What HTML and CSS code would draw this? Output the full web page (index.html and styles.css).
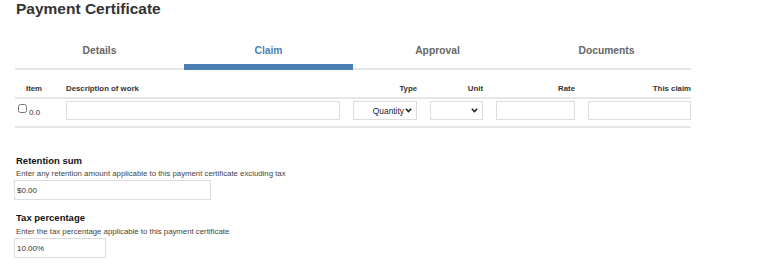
FILE: index.html
```html
<!DOCTYPE html>
<html>
<head>
<meta charset="utf-8">
<title>Payment Certificate</title>
<link rel="stylesheet" href="styles.css">
</head>
<body>
<div class="page">
    <h1 class="title">Payment Certificate</h1>

    <ul class="tabs">
        <li>Details</li>
        <li class="current">Claim</li>
        <li>Approval</li>
        <li>Documents</li>
    </ul>

    <div class="claim">
        <div class="row head">
            <div class="c-item">Item</div>
            <div class="c-left">Description of work</div>
            <div>Type</div>
            <div>Unit</div>
            <div>Rate</div>
            <div>This claim</div>
        </div>
        <div class="row line">
            <div class="c-item"><input type="checkbox" class="chk"><span class="num">0.0</span></div>
            <div><input type="text" class="field"></div>
            <div class="sel">
                <select class="field pick"><option>Quantity</option></select>
                <svg class="chev" width="7" height="5" viewBox="0 0 7 5"><path d="M0.8 0.8 L3.5 3.6 L6.2 0.8" fill="none" stroke="#222" stroke-width="1.6"/></svg>
            </div>
            <div class="sel">
                <select class="field pick"><option></option></select>
                <svg class="chev" width="7" height="5" viewBox="0 0 7 5"><path d="M0.8 0.8 L3.5 3.6 L6.2 0.8" fill="none" stroke="#222" stroke-width="1.6"/></svg>
            </div>
            <div><input type="text" class="field"></div>
            <div><input type="text" class="field"></div>
        </div>
    </div>

    <div class="group">
        <label class="lbl">Retention sum</label>
        <p class="hint">Enter any retention amount applicable to this payment certificate excluding tax</p>
        <input type="text" class="field box wide" value="$0.00">
    </div>

    <div class="group">
        <label class="lbl">Tax percentage</label>
        <p class="hint">Enter the tax percentage applicable to this payment certificate</p>
        <input type="text" class="field box narrow" value="10.00%">
    </div>
</div>
</body>
</html>
```

FILE: styles.css
```css
body,div,ul,li,p,h1{margin:0;padding:0;}
ul{list-style-type:none;}
body{background:#fff;color:#333;font-family:"Liberation Sans",Arial,sans-serif;}
.page{width:676px;margin-left:15px;}
.title{font-size:15.5px;line-height:18px;font-weight:700;color:#333;padding:0 0 0 1px;}

.tabs{display:grid;grid-template-columns:repeat(4,1fr);margin-top:24px;border-bottom:2px solid #e6e6e6;}
.tabs li{text-align:center;font-size:10.3px;font-weight:700;color:#666;line-height:12px;padding:3px 0 11px;}
.tabs li.current{color:#4a7fb3;border-bottom:6px solid #4a7fb3;margin-bottom:-2px;padding-bottom:7px;}

.claim{margin-top:14px;}
.row{display:grid;grid-template-columns:38px 274px 64px 53px 79px 103px;column-gap:13px;align-items:center;}
.head{font-size:7.8px;font-weight:700;line-height:10px;text-align:right;padding-bottom:3px;border-bottom:2px solid #e6e6e6;}
.head .c-item{text-align:center;}
.head .c-left{text-align:left;}
.line{padding:2px 0 6px;border-bottom:2px solid #e6e6e6;}
.line .c-item{display:flex;align-items:center;padding-left:3px;}
.chk{width:9px;height:9px;margin:0 2px 0 0;position:relative;top:-2px;}
.num{font-size:8px;color:#333;position:relative;top:2px;}

.field{display:block;box-sizing:border-box;width:100%;height:19px;border:1px solid #ddd;background:#fff;font-family:"Liberation Sans",Arial,sans-serif;font-size:8px;color:#333;padding:0 2px;outline:none;border-radius:0;}
.sel{position:relative;}
.pick{-webkit-appearance:none;appearance:none;text-align:right;padding-right:12px;color:#222;font-size:8.4px;}
.chev{position:absolute;right:5px;top:7px;pointer-events:none;}

.group{margin-top:27px;}
.group + .group{margin-top:12px;}
.lbl{display:block;font-size:9.5px;font-weight:700;line-height:12px;color:#111;padding-left:1px;}
.hint{font-size:7.8px;line-height:10px;color:#444;margin-top:2px;padding-left:1px;}
.group + .group .hint{margin-top:3px;}
.box{margin-left:-1px;margin-top:1px;height:20px;}
.wide{width:197px;}
.narrow{width:92px;}
```
